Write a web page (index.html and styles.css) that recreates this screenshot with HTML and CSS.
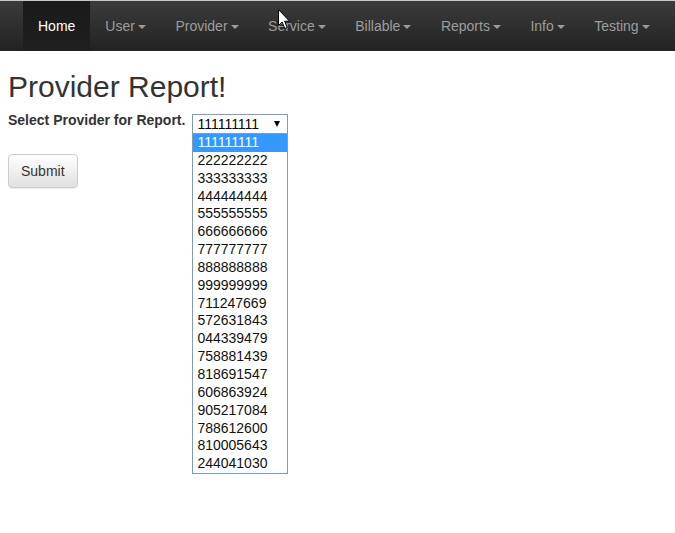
FILE: index.html
```html
<!DOCTYPE html>
<html>
<head>
<meta charset="utf-8">
<title>Provider Report</title>
<link rel="stylesheet" href="styles.css">
</head>
<body>
<nav class="navbar">
  <ul class="nav">
    <li class="active"><a>Home</a></li>
    <li><a>User<span class="caret"></span></a></li>
    <li><a>Provider<span class="caret"></span></a></li>
    <li><a>Service<span class="caret"></span></a></li>
    <li><a>Billable<span class="caret"></span></a></li>
    <li><a>Reports<span class="caret"></span></a></li>
    <li><a>Info<span class="caret"></span></a></li>
    <li><a>Testing<span class="caret"></span></a></li>
  </ul>
</nav>
<main class="content">
  <h1 class="title">Provider Report!</h1>
  <div class="form-row">
    <label class="label">Select Provider for Report.</label>
    <div class="select-wrap">
      <div class="select"><span>111111111</span><span class="arrow"></span></div>
      <ul class="options">
        <li class="selected">111111111</li>
        <li>222222222</li>
        <li>333333333</li>
        <li>444444444</li>
        <li>555555555</li>
        <li>666666666</li>
        <li>777777777</li>
        <li>888888888</li>
        <li>999999999</li>
        <li>711247669</li>
        <li>572631843</li>
        <li>044339479</li>
        <li>758881439</li>
        <li>818691547</li>
        <li>606863924</li>
        <li>905217084</li>
        <li>788612600</li>
        <li>810005643</li>
        <li>244041030</li>
      </ul>
    </div>
  </div>
  <button class="btn">Submit</button>
</main>
<svg class="cursor" width="13" height="21" viewBox="0 0 13 21">
  <path d="M0.5 0.5 L0.5 16.5 L4.2 13 L6.8 19.5 L9.2 18.5 L6.6 12.2 L11.5 12.2 Z" fill="#fff" stroke="#000" stroke-width="1" stroke-linejoin="miter"/>
</svg>
</body>
</html>
```
FILE: styles.css
```css
html, body {
  margin: 0;
  padding: 0;
  background: #fff;
  font-family: "Liberation Sans", Arial, sans-serif;
  color: #333;
  font-size: 14px;
  line-height: 20px;
}
body {
  min-height: 533px;
}
.navbar {
  border-top: 1px solid #c8c8c8;
  height: 50px;
  background: linear-gradient(to bottom, #3b3b3b 0%, #222 100%);
  padding-left: 23px;
}
.nav {
  display: flex;
  margin: 0;
  padding: 0;
  list-style: none;
  height: 50px;
}
.nav li a {
  display: flex;
  align-items: center;
  height: 50px;
  box-sizing: border-box;
  padding: 15px 14.5px 15px 15px;
  color: #9d9d9d;
  font-size: 14px;
  line-height: 20px;
}
.nav li.active a {
  padding: 15px;
  color: #fff;
  background: linear-gradient(to bottom, #1a1a1a 0%, #1f1f1f 100%);
}
.caret {
  display: inline-block;
  width: 0;
  height: 0;
  margin-left: 3px;
  margin-top: 2px;
  border-top: 4px solid #9d9d9d;
  border-left: 4px solid transparent;
  border-right: 4px solid transparent;
}
.content {
  padding: 0 8px;
  min-height: 480px;
}
.title {
  font-size: 30px;
  font-weight: normal;
  line-height: 33px;
  margin: 19px 0 7px;
  color: #333;
}
.form-row {
  display: flex;
  align-items: flex-start;
  gap: 7px;
}
.label {
  font-weight: bold;
  font-size: 14px;
  line-height: 20px;
}
.select-wrap {
  position: relative;
  margin-top: 4px;
}
.select {
  box-sizing: border-box;
  width: 96px;
  height: 20px;
  border: 1px solid #7f9db9;
  display: flex;
  align-items: center;
  justify-content: space-between;
  padding: 0 7px 0 4px;
  font-size: 14px;
  color: #000;
  background: #fff;
}
.arrow {
  width: 0;
  height: 0;
  border-top: 6px solid #000;
  border-left: 3px solid transparent;
  border-right: 3px solid transparent;
}
.options {
  position: absolute;
  top: 19px;
  left: 0;
  width: 96px;
  box-sizing: border-box;
  margin: 0;
  padding: 0;
  list-style: none;
  border: 1px solid #7f9db9;
  background: #fff;
  z-index: 5;
}
.options li {
  height: 17.85px;
  line-height: 17.85px;
  padding-left: 4px;
  font-size: 14px;
  color: #111;
}
.options li.selected {
  background: #3399ff;
  color: #fff;
}
.btn {
  margin-top: 20px;
  height: 34px;
  padding: 6px 12px;
  font-family: "Liberation Sans", Arial, sans-serif;
  font-size: 14px;
  line-height: 20px;
  color: #333;
  border: 1px solid #ccc;
  border-radius: 4px;
  background: linear-gradient(to bottom, #fff 0%, #e0e0e0 100%);
  box-shadow: inset 0 1px 0 rgba(255,255,255,.15), 0 1px 1px rgba(0,0,0,.075);
}
.cursor {
  position: absolute;
  left: 278px;
  top: 9px;
}
```
